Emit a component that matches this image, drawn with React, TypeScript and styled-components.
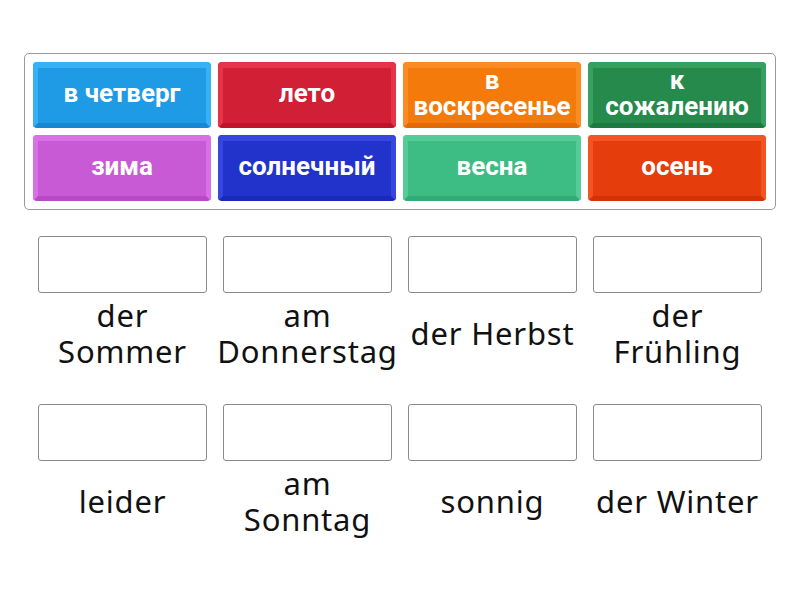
import React from "react";
import styled, { createGlobalStyle } from "styled-components";

const Global = createGlobalStyle`
  html, body { margin: 0; padding: 0; background: #fff; }
  body { width: 800px; height: 600px; overflow: hidden; }
`;

const Page = styled.div`
  width: 800px;
  height: 600px;
  box-sizing: border-box;
  padding: 53px 24px 0 24px;
  display: flex;
  flex-direction: column;
`;

const Bank = styled.div`
  box-sizing: border-box;
  width: 752px;
  height: 157px;
  border: 1px solid #9a9a9a;
  border-radius: 5px;
  padding: 8px 8px 0 8px;
  display: grid;
  grid-template-columns: repeat(4, 178px);
  grid-auto-rows: 66px;
  column-gap: 7px;
  row-gap: 7px;
`;

const Tile = styled.div<{ $face: string; $light: string; $dark: string }>`
  box-sizing: border-box;
  border-radius: 4px;
  border-style: solid;
  border-width: 6px 5px 5px 5px;
  border-color: ${(p) => p.$light} ${(p) => p.$light} ${(p) => p.$dark} ${(p) => p.$light};
  background: ${(p) => p.$face};
  display: flex;
  flex-direction: column;
  align-items: center;
  justify-content: center;
  text-align: center;
  color: #fff;
  font-family: Roboto, "Liberation Sans", sans-serif;
  font-weight: 700;
  font-size: 26px;
  line-height: 26px;
  padding: 0 0 5px 0;
  white-space: nowrap;
`;

const TileLine = styled.span`
  display: block;
  height: 26px;
`;

const Targets = styled.div`
  margin: 26px 0 0 14px;
  width: 724px;
  display: grid;
  grid-template-columns: repeat(4, 169px);
  column-gap: 16px;
  row-gap: 29px;
`;

const Slot = styled.div`
  display: flex;
  flex-direction: column;
`;

const DropBox = styled.div`
  box-sizing: border-box;
  height: 57px;
  border: 1px solid #8a8a8a;
  border-radius: 3px;
  background: #fff;
`;

const Label = styled.div`
  box-sizing: border-box;
  height: 82px;
  padding-bottom: 2px;
  display: flex;
  flex-direction: column;
  align-items: center;
  justify-content: center;
  text-align: center;
  font-family: "Noto Sans", Lato, sans-serif;
  font-size: 31px;
  letter-spacing: 0.8px;
  line-height: 36px;
  color: #111;
  margin: 0 -10px;
  white-space: nowrap;
`;

const LabelLine = styled.span`
  display: block;
  height: 36px;
`;

const tiles = [
  { t: "в четверг", face: "#1f9be6", light: "#37b1f6", dark: "#1887d2" },
  { t: "лето", face: "#d11f35", light: "#e63348", dark: "#bd142a" },
  { t: "в воскресенье", face: "#f47a0c", light: "#fb8c24", dark: "#e26a05" },
  { t: "к сожалению", face: "#258a4c", light: "#36a05f", dark: "#1c7a40" },
  { t: "зима", face: "#c85ad6", light: "#d870e6", dark: "#b649c4" },
  { t: "солнечный", face: "#2233cc", light: "#3646de", dark: "#1a2ab8" },
  { t: "весна", face: "#3dbd84", light: "#55cc97", dark: "#33ab75" },
  { t: "осень", face: "#e53d0c", light: "#f45422", dark: "#d23306" },
];

const labels = [
  "der Sommer",
  "am Donnerstag",
  "der Herbst",
  "der Frühling",
  "leider",
  "am Sonntag",
  "sonnig",
  "der Winter",
];

const twoLine = new Set(["der Sommer", "am Donnerstag", "der Frühling", "am Sonntag"]);
const twoLineTiles = new Set(["в воскресенье", "к сожалению"]);

export default function App() {
  return (
    <>
      <Global />
      <Page>
        <Bank>
          {tiles.map((x) => (
            <Tile key={x.t} $face={x.face} $light={x.light} $dark={x.dark}>
              {(twoLineTiles.has(x.t) ? x.t.split(" ") : [x.t]).map((s) => (
                <TileLine key={s}>{s}</TileLine>
              ))}
            </Tile>
          ))}
        </Bank>
        <Targets>
          {labels.map((l) => (
            <Slot key={l}>
              <DropBox />
              <Label>
                {(twoLine.has(l) ? l.split(" ") : [l]).map((s) => (
                  <LabelLine key={s}>{s}</LabelLine>
                ))}
              </Label>
            </Slot>
          ))}
        </Targets>
      </Page>
    </>
  );
}
